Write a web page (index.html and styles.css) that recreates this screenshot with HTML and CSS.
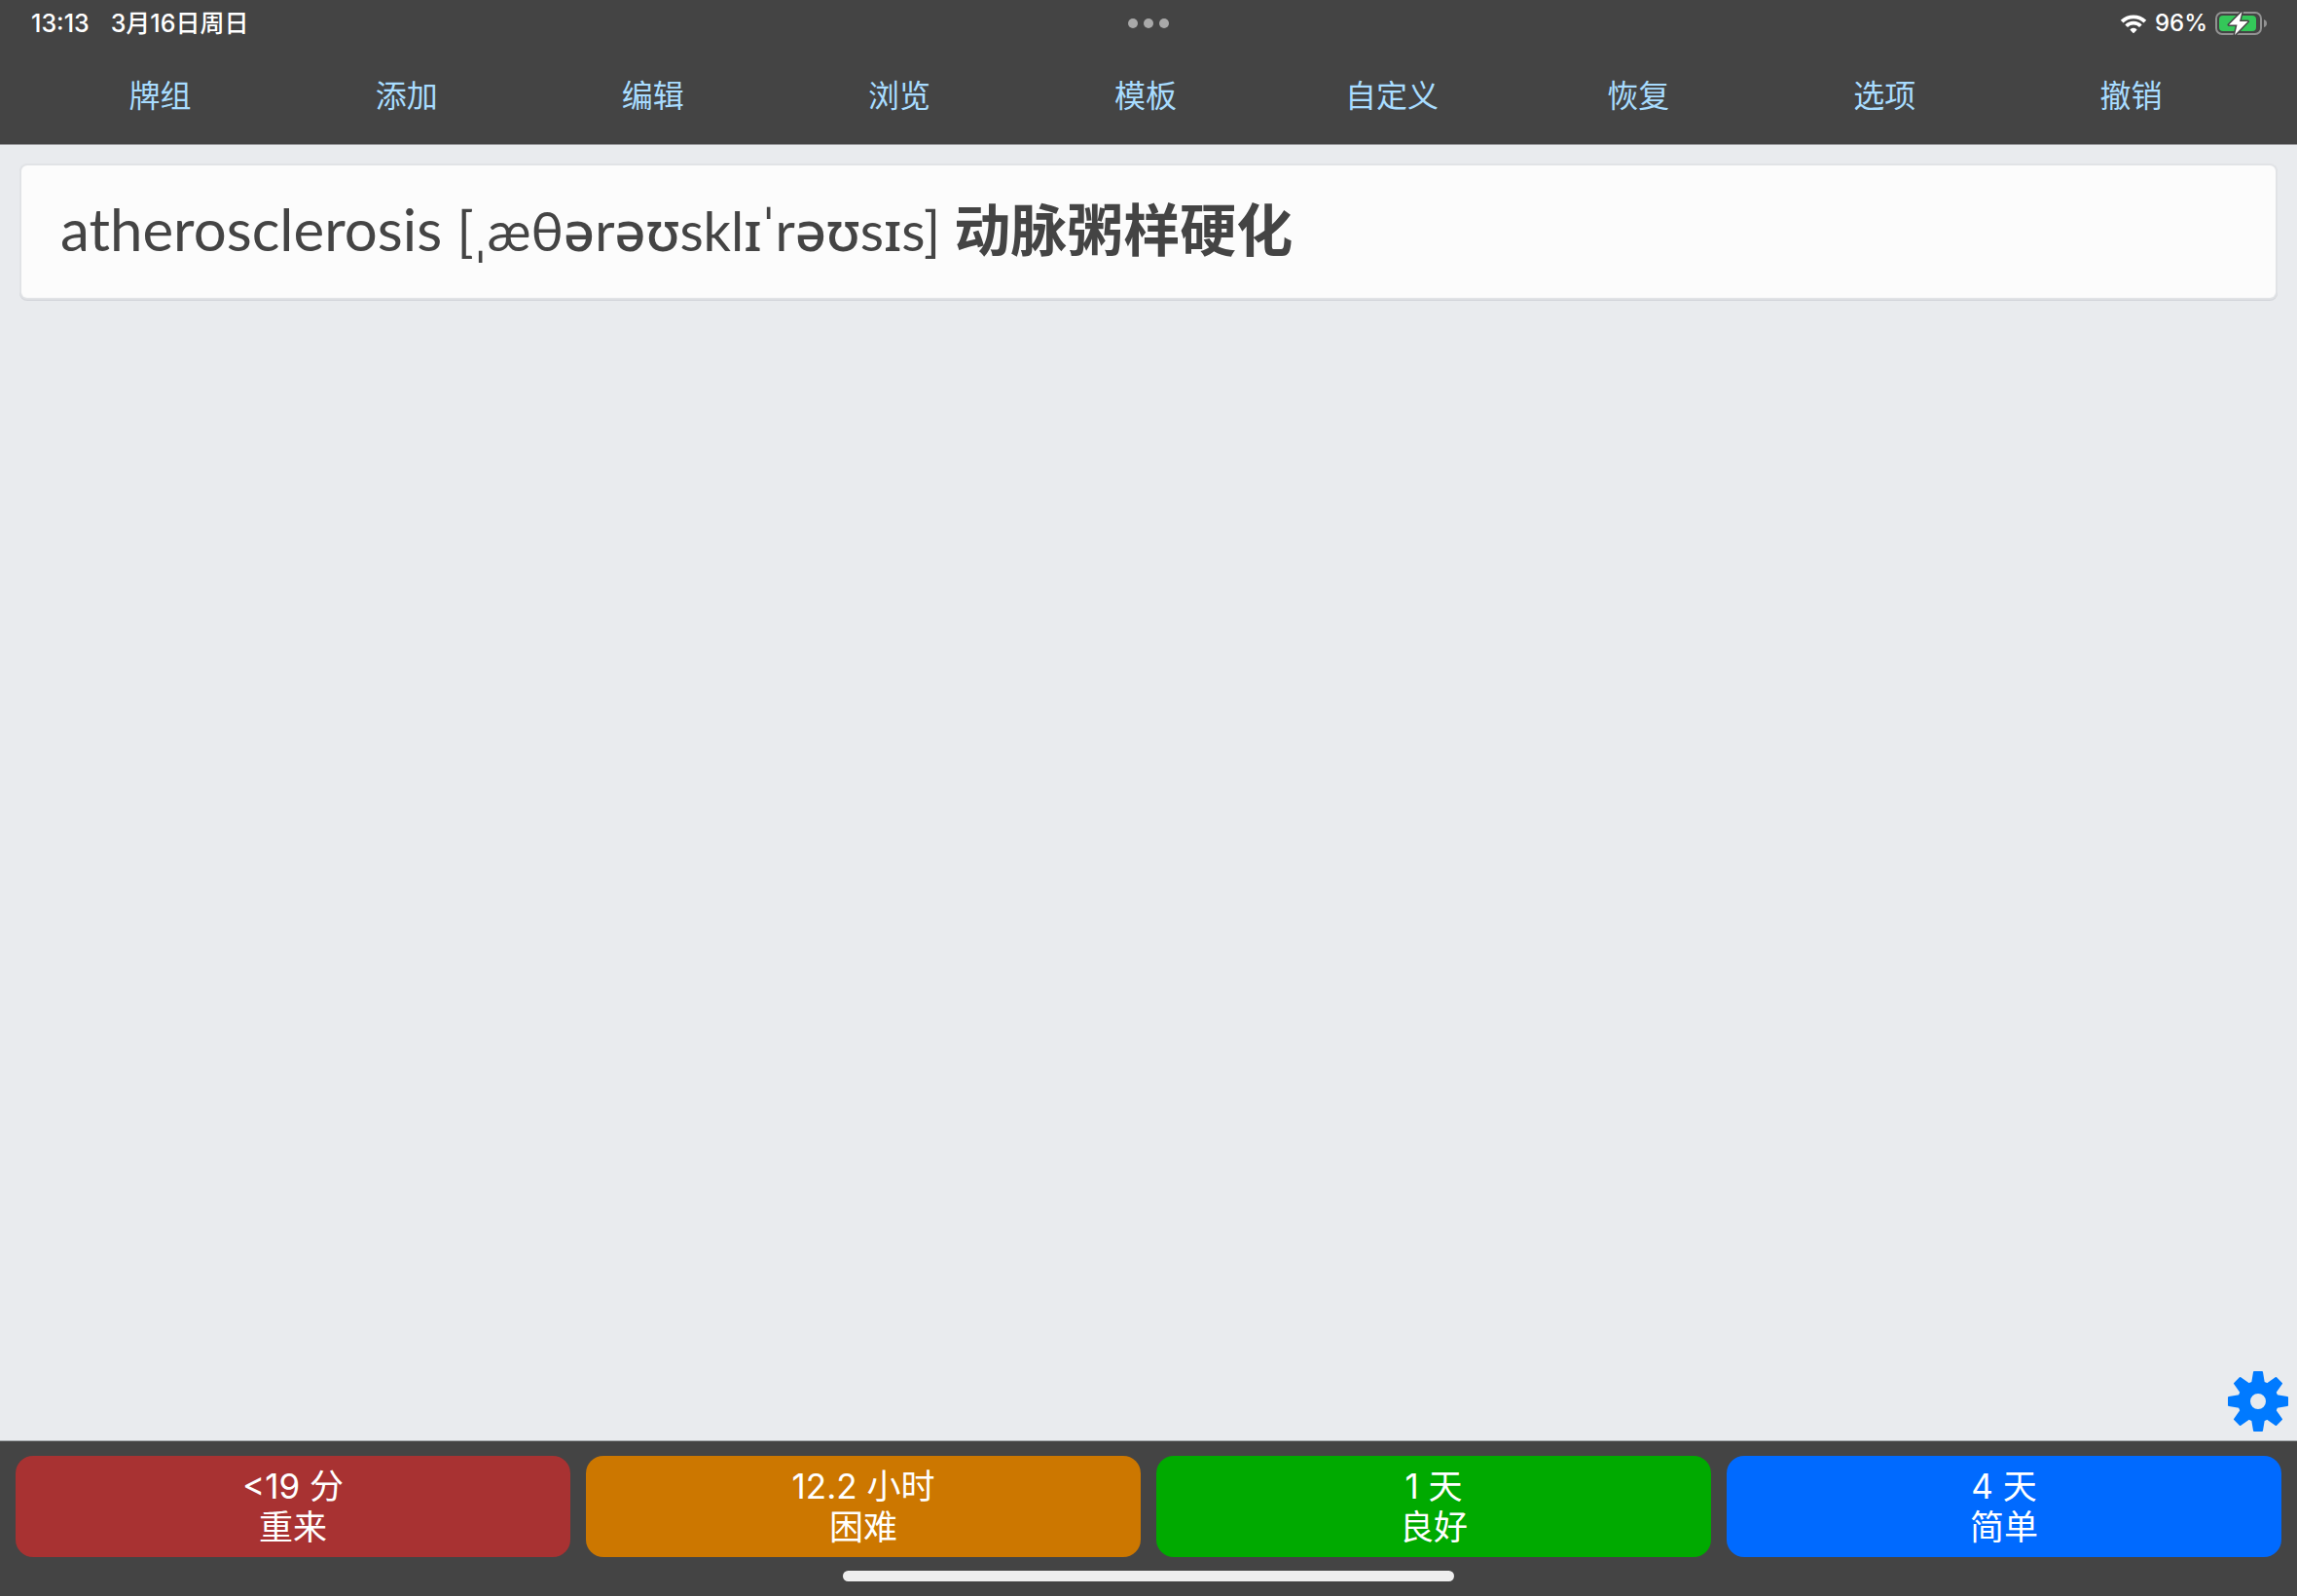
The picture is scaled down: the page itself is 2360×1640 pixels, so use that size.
FILE: index.html
```html
<!DOCTYPE html>
<html lang="zh-CN">

<head>
    <meta charset="utf-8">
    <meta name="viewport" content="width=device-width, initial-scale=1.0">
    <title>atherosclerosis</title>
    <link rel="stylesheet" href="styles.css">
</head>

<body>
    <header class="top">
        <div class="status-bar">
            <div class="status-left">
                <span>13:13</span>
                <span>3月16日周日</span>
            </div>
            <div class="dots">
                <span class="dot"></span>
                <span class="dot"></span>
                <span class="dot"></span>
            </div>
            <div class="status-right">
                <svg class="wifi" viewBox="0 0 28 20">
                    <path d="M0.8 6.8 A18.8 18.8 0 0 1 27.2 6.8 L24.5 9.5 A15 15 0 0 0 3.5 9.5 Z" />
                    <path d="M5.3 11.4 A12.3 12.3 0 0 1 22.7 11.4 L20 14 A8.6 8.6 0 0 0 8 14 Z" />
                    <path d="M10.8 16 A5 5 0 0 1 17.2 16 Q17.8 16.5 17.2 17 L14.6 19.7 Q14 20.2 13.4 19.7 L10.8 17 Q10.2 16.5 10.8 16 Z" />
                </svg>
                <span>96%</span>
                <svg class="battery" viewBox="0 0 54 24">
                    <rect class="battery-case" x="1" y="1" width="46" height="22" rx="6" />
                    <path class="battery-tip" d="M50 8 Q53 9 53 12 Q53 15 50 16 Z" />
                    <rect class="battery-level" x="4" y="4" width="38" height="16" rx="4" />
                    <path class="bolt" d="M27.5 0 L14 13.5 H22.5 L20 24 L33.5 10 H25 Z" />
                </svg>
            </div>
        </div>
        <nav class="menu">
            <a href="#">牌组</a>
            <a href="#">添加</a>
            <a href="#">编辑</a>
            <a href="#">浏览</a>
            <a href="#">模板</a>
            <a href="#">自定义</a>
            <a href="#">恢复</a>
            <a href="#">选项</a>
            <a href="#">撤销</a>
        </nav>
    </header>

    <main class="review">
        <div class="card">atherosclerosis <span class="phonetic">[ˌæθ<i>ə</i>r<i>əʊ</i>skl<i>ɪ</i>ˈr<i>əʊ</i>s<i>ɪ</i>s] </span><b>动脉粥样硬化</b></div>
        <button class="settings" type="button" aria-label="设置">
            <svg viewBox="-31 -31 62 62">
                <defs>
                    <path id="tooth" d="M-7 -18 L-5 -30 Q-5 -31 -4 -31 H4 Q5 -31 5 -30 L7 -18 Z" />
                </defs>
                <path fill-rule="evenodd" d="M0 -21 A21 21 0 1 1 0 21 A21 21 0 1 1 0 -21 Z M0 -8 A8 8 0 1 0 0 8 A8 8 0 1 0 0 -8 Z" />
                <use href="#tooth" />
                <use href="#tooth" transform="rotate(45)" />
                <use href="#tooth" transform="rotate(90)" />
                <use href="#tooth" transform="rotate(135)" />
                <use href="#tooth" transform="rotate(180)" />
                <use href="#tooth" transform="rotate(225)" />
                <use href="#tooth" transform="rotate(270)" />
                <use href="#tooth" transform="rotate(315)" />
            </svg>
        </button>
    </main>

    <footer class="bottom">
        <div class="answers">
            <button class="answer again" type="button">&lt;19 分<br>重来</button>
            <button class="answer hard" type="button">12.2 小时<br>困难</button>
            <button class="answer good" type="button">1 天<br>良好</button>
            <button class="answer easy" type="button">4 天<br>简单</button>
        </div>
        <div class="home-bar"></div>
    </footer>
</body>

</html>
```

FILE: styles.css
```css
* {
    box-sizing: border-box;
    padding: 0;
    margin: 0;
}

body {
    display: flex;
    flex-direction: column;
    min-height: 100vh;
    background: #e9ebee;
    font-family: Inter, "Noto Sans CJK SC", sans-serif;
}

.top {
    background: #444;
    border-bottom: 1px solid #98989b;
}

.status-bar {
    display: grid;
    grid-template-columns: 1fr auto 1fr;
    align-items: center;
    height: 48px;
    padding: 0 30px;
    color: #fff;
    font-size: 24px;
    font-weight: 500;
    line-height: 32px;
}

.status-left {
    display: flex;
    gap: 22px;
    padding-left: 2px;
    font-size: 25px;
}

.dots {
    display: flex;
    gap: 6px;
}

.dot {
    width: 10px;
    height: 10px;
    border-radius: 50%;
    background: #a9a9a9;
}

.status-right {
    display: flex;
    justify-content: flex-end;
    align-items: center;
    gap: 8px;
}

.wifi {
    width: 28px;
    height: 20px;
    fill: #fff;
}

.battery {
    width: 54px;
    height: 24px;
}

.battery-case {
    fill: none;
    stroke: #929292;
    stroke-width: 2;
}

.battery-tip {
    fill: #929292;
}

.battery-level {
    fill: #34c759;
}

.bolt {
    fill: #fff;
    stroke: #444;
    stroke-width: 3;
    stroke-linejoin: round;
    paint-order: stroke;
}

.menu {
    display: grid;
    grid-template-columns: repeat(9, 1fr);
    align-items: center;
    height: 100px;
    padding: 1px 44px 0 38px;
}

.menu a {
    color: #a8dcff;
    font-size: 32px;
    line-height: 48px;
    text-align: center;
    text-decoration: none;
}

.review {
    position: relative;
    flex: 1;
    padding: 21px 22px;
}

.card {
    padding: 25px 40px 31px;
    background: #fcfcfc;
    border-radius: 6px;
    box-shadow: 0 0 0 2px #e1e3e6, 0 1px 0 2px #cfd1d6;
    color: #444;
    font-family: Lato, "Open Sans", "Noto Sans CJK SC", sans-serif;
    font-size: 60px;
    font-weight: 400;
    line-height: 80px;
}

.phonetic {
    font-size: 56px;
    line-height: 1;
}

.phonetic i {
    font-family: "Noto Sans", "Open Sans", sans-serif;
    font-style: normal;
    font-weight: 500;
}

.card b {
    font-size: 58px;
    font-weight: 700;
    line-height: 1;
}

.settings {
    position: absolute;
    right: 9px;
    bottom: 9px;
    width: 62px;
    height: 62px;
    border: none;
    background: none;
}

.settings svg {
    display: block;
    fill: #007aff;
}

.bottom {
    padding: 15px 16px;
    background: #444;
    border-top: 1px solid #a3a8aa;
}

.answers {
    display: grid;
    grid-template-columns: repeat(4, 1fr);
    gap: 16px;
}

.answer {
    height: 104px;
    border: none;
    border-radius: 18px;
    color: #fff;
    font-family: inherit;
    font-size: 35px;
    line-height: 42px;
}

.again {
    background: #a83232;
}

.hard {
    background: #cc7700;
}

.good {
    background: #00aa00;
}

.easy {
    background: #006aff;
}

.home-bar {
    width: 27%;
    height: 11px;
    margin: 14px auto 0;
    border-radius: 6px;
    background: #eee;
}
```
